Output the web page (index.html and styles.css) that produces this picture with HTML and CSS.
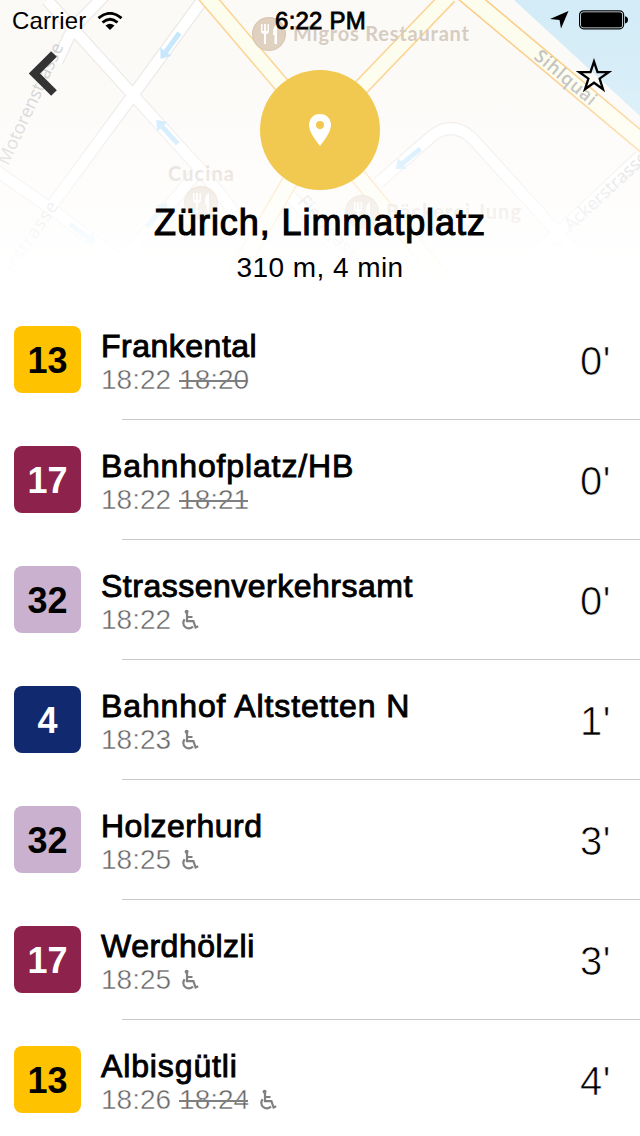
FILE: index.html
```html
<!DOCTYPE html>
<html lang="en">
<head>
<meta charset="utf-8">
<title>Zürich, Limmatplatz</title>
<link rel="stylesheet" href="styles.css">
</head>
<body>
<svg class="sprites" width="0" height="0">
  <symbol id="wheelchair" viewBox="0 0 18 22">
    <circle cx="5.600" cy="2.800" r="2"/>
    <path d="M6 4v8.200h6.400l2.200 6.300 2.600-1.200M6.300 8h5.200M3.700 10.200A5.300 5.300 0 1 0 12 17.500" fill="none" stroke="currentColor" stroke-width="2.200"/>
  </symbol>
  <symbol id="food" viewBox="-18 -18 36 36">
    <circle r="17" fill="#d6c3ae"/><circle r="15.8" fill="#decfbd"/>
    <path d="M-8-10v7q0 3 3 3v10h2V0q3 0 3-3v-7h-1.500v7h-1.600v-7h-1.800v7h-1.600v-7zM8-10q-4 2-4 9v2h1.500v9H8z" fill="#fff"/>
  </symbol>
  <symbol id="arrow" viewBox="-18 -8 36 16">
    <path d="M-16 0l9-7v4.500H16v5H-7V7z" fill="#c3e6fc"/>
  </symbol>
</svg>
<header class="header">
  <svg class="map" viewBox="0 0 640 300">
    <rect width="640" height="300" fill="#fcfaf7"/>
    <path d="M514 0H640V116Z" fill="#d3ecf7"/>
    <g class="road-edge"><path id="streets" d="M47 0L133 95 200 169 262 247M204-2L133 95 50 208M104-4L73 28 57 62M-5 170L50 208 122 262 200 169M378 183L432 136Q452 120 472 138L558 233 596 274M640 156L558 233 508 276M282 186L350 265"/></g>
    <g class="road-fill"><use href="#streets"/></g>
    <g class="main-edge"><path id="mains" d="M200-11L320 130 449-4M320 130L232 280M320 130L447 284"/></g>
    <path class="quai-edge" d="M457-13L655 153"/>
    <g class="main-fill"><use href="#mains"/></g>
    <path class="quai-fill" d="M457-13L655 153"/>
    <use href="#arrow" x="-18" y="-8" width="36" height="16" transform="translate(170 46) rotate(-54)"/>
    <use href="#arrow" x="-18" y="-8" width="36" height="16" transform="translate(167 132) rotate(48)"/>
    <use href="#arrow" x="-18" y="-8" width="36" height="16" transform="translate(83 234) rotate(216)"/>
    <use href="#arrow" x="-18" y="-8" width="36" height="16" transform="translate(157 215) rotate(130)"/>
    <use href="#arrow" x="-18" y="-8" width="36" height="16" transform="translate(408 159) rotate(-39)"/>
    <g class="street-name">
      <text transform="translate(8 166) rotate(-65)" textLength="132">Motorenstrasse</text>
      <text transform="translate(6 284) rotate(-56)" textLength="94">terstrasse</text>
      <text class="strong" transform="translate(533 58) rotate(40)" textLength="75">Sihlquai</text>
      <text transform="translate(571 232) rotate(-43)" textLength="107">Ackerstrasse</text>
      <text transform="translate(297 202) rotate(48)" textLength="90">Fierzgasse</text>
    </g>
    <g class="place-name">
      <text x="293" y="41" textLength="176">Migros Restaurant</text>
      <text x="168" y="181" textLength="66">Cucina</text>
      <text x="386" y="219" textLength="135">Bäckerei Jung</text>
    </g>
    <use href="#food" x="251" y="16" width="36" height="36"/>
    <use href="#food" x="183" y="185" width="36" height="36"/>
    <use href="#food" x="344" y="194" width="36" height="36"/>
  </svg>
  <div class="fade"></div>
  <div class="status">
    <div class="carrier"><span>Carrier</span>
      <svg width="26" height="18" viewBox="0 0 26 18"><path d="M1.500 6.200Q13-3.500 24.500 6.200M5.500 10.500Q13 4 20.500 10.500" fill="none" stroke="#000" stroke-width="2.900"/><path d="M8.500 13.500Q13 9.800 17.500 13.500L13 18Z"/></svg>
    </div>
    <div class="clock">6:22 PM</div>
    <div class="indicators">
      <svg width="19" height="18" viewBox="0 0 19 18"><path d="M18.500 0L11 17.500 9.500 9 0 8Z"/></svg>
      <svg width="50" height="20" viewBox="0 0 50 20"><rect x=".6" y=".8" width="44" height="18" rx="4" fill="#fff" fill-opacity=".5" stroke="#000" stroke-width="1.200"/><rect x="2" y="2.200" width="41.200" height="15.200" rx="2.500"/><path d="M46 6.200q3 .5 3 3.600t-3 3.600z"/></svg>
    </div>
  </div>
  <div class="hero">
    <svg class="back" width="28" height="46" viewBox="0 0 28 46"><path d="M25 3L5.500 22.500 25 42" fill="none" stroke="#333" stroke-width="8"/></svg>
    <div class="disc"><svg width="24" height="34" viewBox="0 0 24 34"><path d="M12 1C5.500 1 1 5.800 1 12c0 7.500 7.500 16 11 21 3.500-5 11-13.500 11-21C23 5.800 18.500 1 12 1zM12 8a4 4 0 1 1 0 8 4 4 0 0 1 0-8z" fill="#fff" fill-rule="evenodd"/></svg></div>
    <svg class="star" width="36" height="36" viewBox="0 0 36 36"><path d="M18 3.600L21.500 14.200H32.600L23.600 20.600 27 31.200 18 24.700 9 31.200 12.400 20.600 3.400 14.200H14.500Z" fill="none" stroke="#000" stroke-width="2.300"/></svg>
  </div>
  <h1 class="stop">Zürich, Limmatplatz</h1>
  <p class="distance">310 m, 4 min</p>
</header>
<main class="list">
  <section class="row"><div class="badge yellow">13</div><div class="info"><h2 class="dest">Frankental</h2><p class="times"><span>18:22</span><span class="old">18:20</span></p></div><div class="mins">0'</div></section>
  <section class="row"><div class="badge wine">17</div><div class="info"><h2 class="dest wide">Bahnhofplatz/HB</h2><p class="times"><span>18:22</span><span class="old">18:21</span></p></div><div class="mins">0'</div></section>
  <section class="row"><div class="badge lilac">32</div><div class="info"><h2 class="dest">Strassenverkehrsamt</h2><p class="times"><span>18:22</span><svg class="chair"><use href="#wheelchair"/></svg></p></div><div class="mins">0'</div></section>
  <section class="row"><div class="badge blue">4</div><div class="info"><h2 class="dest wide">Bahnhof Altstetten N</h2><p class="times"><span>18:23</span><svg class="chair"><use href="#wheelchair"/></svg></p></div><div class="mins">1'</div></section>
  <section class="row"><div class="badge lilac">32</div><div class="info"><h2 class="dest">Holzerhurd</h2><p class="times"><span>18:25</span><svg class="chair"><use href="#wheelchair"/></svg></p></div><div class="mins">3'</div></section>
  <section class="row"><div class="badge wine">17</div><div class="info"><h2 class="dest">Werdhölzli</h2><p class="times"><span>18:25</span><svg class="chair"><use href="#wheelchair"/></svg></p></div><div class="mins">3'</div></section>
  <section class="row"><div class="badge yellow">13</div><div class="info"><h2 class="dest wide">Albisgütli</h2><p class="times"><span>18:26</span><span class="old">18:24</span><svg class="chair"><use href="#wheelchair"/></svg></p></div><div class="mins">4'</div></section>
</main>
</body>
</html>
```
FILE: styles.css
```css
* { box-sizing: border-box; margin: 0; }
body { width: 640px; height: 1136px; overflow: hidden; background: #fff; color: #000; font-family: "Liberation Sans", Arial, sans-serif; }
svg { display: block; flex: none; }
.sprites { position: absolute; }

.header { position: relative; height: 300px; }
.map, .fade { position: absolute; top: 0; left: 0; width: 640px; height: 300px; }
.fade { background: linear-gradient(rgba(255,255,255,0) 0, rgba(255,255,255,.1) 80px, rgba(255,255,255,.42) 150px, rgba(255,255,255,.7) 205px, rgba(255,255,255,.92) 250px, #fff 285px); }
.map path { stroke-linejoin: round; }
.road-edge, .road-fill, .main-edge, .main-fill, .quai-edge, .quai-fill { fill: none; }
.road-edge { stroke: #ebe8e5; stroke-width: 13; }
.road-fill { stroke: #fff; stroke-width: 10.5; }
.main-edge { stroke: #fbd28f; stroke-width: 17; }
.main-fill { stroke: #fdfdee; stroke-width: 14; }
.quai-edge { stroke: #fbcb82; stroke-width: 18.5; }
.quai-fill { stroke: #fdfdee; stroke-width: 15.5; }
.street-name { font: 18px "Open Sans", sans-serif; fill: #cdcdcf; }
.street-name .strong { font-weight: 600; fill: #bdbdbd; }
.place-name { font: bold 20px Lato, sans-serif; fill: #d5cabf; }

.status { position: relative; display: grid; grid-template-columns: 1fr 120px 1fr; align-items: center; height: 40px; padding: 0 11px 0 12px; font-size: 24px; }
.carrier { display: flex; align-items: center; gap: 11px; padding-top: 1px; letter-spacing: .15px; }
.clock { padding-top: 1px; text-align: center; -webkit-text-stroke: .8px #000; letter-spacing: .2px; }
.indicators { display: flex; justify-content: flex-end; align-items: center; gap: 10px; }

.hero { position: relative; display: grid; grid-template-columns: 1fr 120px 1fr; height: 150px; padding: 0 28px; }
.back { margin: 11px 0 0 1px; }
.star { margin: 18px 0 0; justify-self: end; }
.disc { display: flex; align-items: center; justify-content: center; width: 120px; height: 120px; margin-top: 30px; border-radius: 50%; background: #f1c950; }
.stop { position: relative; margin-top: 11px; text-align: center; font-size: 36px; line-height: 44px; font-weight: 400; letter-spacing: .93px; -webkit-text-stroke: 1.1px #000; }
.distance { position: relative; margin-top: 7px; text-align: center; font-size: 28px; line-height: 32px; letter-spacing: .45px; }

.row { position: relative; display: flex; height: 120px; padding: 26px 29px 0 14px; }
.row::after { content: ""; position: absolute; left: 122px; right: 0; bottom: 0; height: 1px; background: #c8c7cc; }
.badge { width: 67px; height: 67px; border-radius: 8px; font-size: 36px; font-weight: 700; line-height: 70px; text-align: center; }
.yellow { background: #ffc200; }
.wine { background: #8d224d; color: #fff; }
.lilac { background: #cab1d0; }
.blue { background: #11296f; color: #fff; }
.info { flex: 1; padding: 1px 0 0 20px; }
.dest { font-size: 32px; line-height: 38px; font-weight: 400; letter-spacing: .5px; white-space: nowrap; -webkit-text-stroke: .9px #000; }
.wide { letter-spacing: .87px; }
.times { display: flex; align-items: center; gap: 8px; height: 30px; font-size: 28px; line-height: 30px; color: #666; -webkit-text-stroke: .45px #fff; }
.old { position: relative; }
.old::after { content: ""; position: absolute; left: 0; right: 1px; top: 15px; height: 2px; background: #808080; }
.chair { width: 18px; height: 22px; margin-left: 2px; fill: currentColor; color: #808080; -webkit-text-stroke: 0; }
.mins { font-size: 40px; line-height: 70px; letter-spacing: .5px; -webkit-text-stroke: .7px #fff; }
```
